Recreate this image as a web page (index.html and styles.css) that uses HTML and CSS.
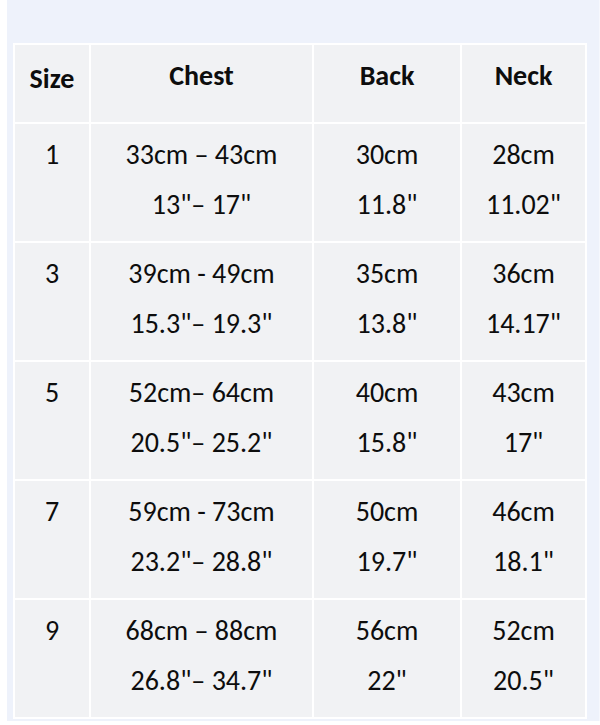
FILE: index.html
```html
<!DOCTYPE html>
<html lang="en">
<head>
<meta charset="utf-8">
<title>Size chart</title>
<link rel="stylesheet" href="styles.css">
</head>
<body>
<div class="page">
  <div class="chart">
    <div class="cell head size">Size</div>
    <div class="cell head">Chest</div>
    <div class="cell head">Back</div>
    <div class="cell head">Neck</div>

    <div class="cell size">1</div>
    <div class="cell">33cm – 43cm<br>13"– 17"</div>
    <div class="cell">30cm<br>11.8"</div>
    <div class="cell">28cm<br>11.02"</div>

    <div class="cell size">3</div>
    <div class="cell">39cm - 49cm<br>15.3"– 19.3"</div>
    <div class="cell">35cm<br>13.8"</div>
    <div class="cell">36cm<br>14.17"</div>

    <div class="cell size">5</div>
    <div class="cell">52cm– 64cm<br>20.5"– 25.2"</div>
    <div class="cell">40cm<br>15.8"</div>
    <div class="cell">43cm<br>17"</div>

    <div class="cell size">7</div>
    <div class="cell">59cm - 73cm<br>23.2"– 28.8"</div>
    <div class="cell">50cm<br>19.7"</div>
    <div class="cell">46cm<br>18.1"</div>

    <div class="cell size">9</div>
    <div class="cell">68cm – 88cm<br>26.8"– 34.7"</div>
    <div class="cell">56cm<br>22"</div>
    <div class="cell">52cm<br>20.5"</div>
  </div>
</div>
</body>
</html>
```

FILE: styles.css
```css
html, body {
  margin: 0;
  padding: 0;
  background: #ffffff;
}

.page {
  margin-left: 7px;
  height: 721px;
  background: #eef2fb;
  padding: 43px 0 0 6px;
  box-sizing: border-box;
  border-right: 1px solid #f6f8fd;
  width: 593px;
}

.chart {
  width: 574px;
  box-sizing: border-box;
  display: grid;
  grid-template-columns: 74px 221px 146px 123px;
  grid-template-rows: 77px repeat(5, 117px);
  gap: 2px;
  padding: 2px;
  background: #ffffff;
  font-family: "Carlito", "Lato", "Liberation Sans", sans-serif;
  font-size: 28px;
  color: #0d0d0d;
}

.cell {
  background: #f1f2f4;
  text-align: center;
  line-height: 50px;
  padding-top: 6px;
  box-sizing: border-box;
}

.head {
  font-weight: bold;
  padding-top: 6px;
}

.head.size {
  padding-top: 9px;
}
```
